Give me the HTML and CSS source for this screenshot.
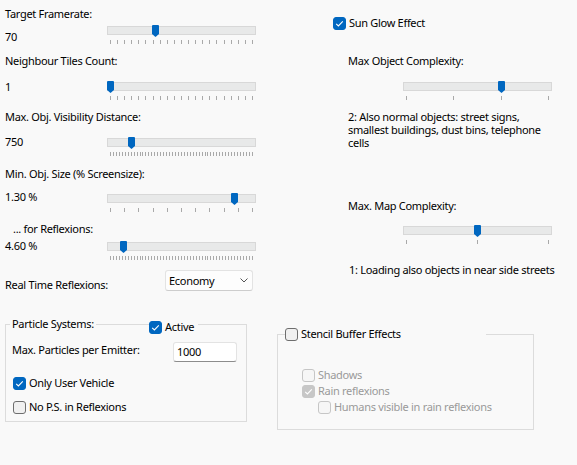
FILE: index.html
```html
<!DOCTYPE html>
<html>
<head>
<meta charset="utf-8">
<link rel="stylesheet" href="styles.css">
</head>
<body>
<div class="dialog">
  <div class="col left">
    <div class="lbl l1">Target Framerate:</div>
    <div class="srow s1">
      <div class="val v1">70</div>
      <div class="slider"><div class="track"></div><svg class="thumb" style="left:45px" width="7" height="12" viewBox="0 0 7 12"><path d="M1 0H6Q7 0 7 1V9L3.5 12L0 9V1Q0 0 1 0Z"/></svg><div class="ticks" data-n="21"></div></div>
    </div>
    <div class="lbl l2">Neighbour Tiles Count:</div>
    <div class="srow s2">
      <div class="val v2">1</div>
      <div class="slider"><div class="track"></div><svg class="thumb" style="left:0px" width="7" height="12" viewBox="0 0 7 12"><path d="M1 0H6Q7 0 7 1V9L3.5 12L0 9V1Q0 0 1 0Z"/></svg><div class="ticks" data-n="21"></div></div>
    </div>
    <div class="lbl l3">Max. Obj. Visibility Distance:</div>
    <div class="srow s3">
      <div class="val v3">750</div>
      <div class="slider"><div class="track"></div><svg class="thumb" style="left:21px" width="7" height="12" viewBox="0 0 7 12"><path d="M1 0H6Q7 0 7 1V9L3.5 12L0 9V1Q0 0 1 0Z"/></svg><div class="ticks" data-n="49"></div></div>
    </div>
    <div class="lbl l4">Min. Obj. Size (% Screensize):</div>
    <div class="srow s4">
      <div class="val v4">1.30 %</div>
      <div class="slider"><div class="track"></div><svg class="thumb" style="left:124px" width="7" height="12" viewBox="0 0 7 12"><path d="M1 0H6Q7 0 7 1V9L3.5 12L0 9V1Q0 0 1 0Z"/></svg><div class="ticks" data-n="11"></div></div>
    </div>
    <div class="lbl l5">... for Reflexions:</div>
    <div class="srow s5">
      <div class="val v5">4.60 %</div>
      <div class="slider"><div class="track"></div><svg class="thumb" style="left:13px" width="7" height="12" viewBox="0 0 7 12"><path d="M1 0H6Q7 0 7 1V9L3.5 12L0 9V1Q0 0 1 0Z"/></svg><div class="ticks" data-n="49"></div></div>
    </div>
    <div class="rtr">
      <div class="rtr-lbl">Real Time Reflexions:</div>
      <div class="select"><span>Economy</span><svg width="8" height="5" viewBox="0 0 8 5"><path d="M0.5 0.5L4 4L7.5 0.5" fill="none" stroke="#555" stroke-width="1"/></svg></div>
    </div>
    <div class="group pgroup">
      <fieldset class="fs pfs">
        <legend class="plegend">Particle Systems:</legend>
        <div class="prow">
          <div class="prow-lbl">Max. Particles per Emitter:</div>
          <div class="input">1000</div>
        </div>
        <div class="check c-ouv"><span class="cb on"><svg width="13" height="13" viewBox="0 0 13 13"><path d="M3.2 6.8L5.4 9L9.8 4.4" fill="none" stroke="#fff" stroke-width="1.1"/></svg></span><span>Only User Vehicle</span></div>
        <div class="check c-nops"><span class="cb"></span><span>No P.S. in Reflexions</span></div>
      </fieldset>
      <div class="check active"><span class="cb on"><svg width="13" height="13" viewBox="0 0 13 13"><path d="M3.2 6.8L5.4 9L9.8 4.4" fill="none" stroke="#fff" stroke-width="1.1"/></svg></span><span>Active</span></div>
    </div>
  </div>
  <div class="col right">
    <div class="check sun"><span class="cb on"><svg width="13" height="13" viewBox="0 0 13 13"><path d="M3.2 6.8L5.4 9L9.8 4.4" fill="none" stroke="#fff" stroke-width="1.1"/></svg></span><span>Sun Glow Effect</span></div>
    <div class="lbl r1">Max Object Complexity:</div>
    <div class="slider rs1"><div class="track"></div><svg class="thumb" style="left:95px" width="7" height="12" viewBox="0 0 7 12"><path d="M1 0H6Q7 0 7 1V9L3.5 12L0 9V1Q0 0 1 0Z"/></svg><div class="ticks" data-n="4"></div></div>
    <div class="desc">2: Also normal objects: street signs,<br>smallest buildings, dust bins, telephone<br>cells</div>
    <div class="lbl r2">Max. Map Complexity:</div>
    <div class="slider rs2"><div class="track"></div><svg class="thumb" style="left:71px" width="7" height="12" viewBox="0 0 7 12"><path d="M1 0H6Q7 0 7 1V9L3.5 12L0 9V1Q0 0 1 0Z"/></svg><div class="ticks" data-n="3"></div></div>
    <div class="lbl r3">1: Loading also objects in near side streets</div>
    <fieldset class="fs sfs">
      <legend class="slegend"><span class="check"><span class="cb"></span><span>Stencil Buffer Effects</span></span></legend>
      <div class="check dis c-sh"><span class="cb"></span><span>Shadows</span></div>
      <div class="check dis c-rain"><span class="cb on"><svg width="13" height="13" viewBox="0 0 13 13"><path d="M3.2 6.8L5.4 9L9.8 4.4" fill="none" stroke="#fff" stroke-width="1.1"/></svg></span><span>Rain reflexions</span></div>
      <div class="check dis c-hum"><span class="cb"></span><span>Humans visible in rain reflexions</span></div>
    </fieldset>
  </div>
</div>
<script src="script.js"></script>
</body>
</html>
```
FILE: styles.css
```css
html, body {
  margin: 0;
  padding: 0;
}
body {
  background: #f9f9f9;
  font-family: "Noto Sans", "Open Sans", sans-serif;
  font-size: 11px;
  line-height: 16px;
  letter-spacing: -0.3px;
  color: #000;
  width: 577px;
  height: 465px;
  overflow: hidden;
}
.dialog {
  display: grid;
  grid-template-columns: 277px 300px;
}
.left {
  padding: 6px 0 0 5px;
}
.right {
  padding-top: 15px;
}
.lbl {
  height: 16px;
  white-space: nowrap;
}
.srow {
  display: flex;
  height: 18px;
}
.val {
  width: 102px;
  flex: none;
  height: 16px;
}
.slider {
  position: relative;
  width: 149px;
  height: 18px;
}
.track {
  height: 9px;
  box-sizing: border-box;
  border: 1px solid #d8d8d8;
  background: #e8e9e9;
}
.thumb {
  position: absolute;
  top: -1px;
  fill: #0067c0;
}
.ticks {
  display: flex;
  justify-content: space-between;
  padding: 0 3px;
  margin-top: 5px;
  height: 4px;
}
.ticks i {
  width: 1px;
  background: #a9a9a9;
}
.s1 { margin-top: 4px; }
.v1 { margin-top: 3px; }
.l2 { margin-top: 9px; }
.s2 { margin-top: 13px; }
.v2 { margin-top: -3px; }
.l3 { margin-top: 9px; }
.s3 { margin-top: 13px; }
.v3 { margin-top: -4px; }
.l4 { margin-top: 10px; }
.s4 { margin-top: 12px; }
.v4 { margin-top: -5px; }
.l5 { margin-top: 9px; padding-left: 8px; }
.s5 { margin-top: 5px; }
.v5 { margin-top: -4px; }

.rtr {
  display: flex;
  height: 21px;
  margin-top: 10px;
}
.rtr-lbl {
  width: 160px;
  margin-top: 7px;
  height: 16px;
}
.select {
  width: 88px;
  height: 21px;
  box-sizing: border-box;
  background: #fdfdfd;
  border: 1px solid #e3e3e3;
  border-bottom-color: #cdcdcd;
  border-radius: 3px;
  display: flex;
  align-items: center;
  justify-content: space-between;
  padding: 0 4px 0 3px;
  line-height: 16px;
}

.fs {
  margin: 0;
  border: 1px solid #dcdcdc;
  min-width: 0;
}
.group {
  position: relative;
}
.pgroup {
  margin-top: 25px;
}
.pfs {
  width: 242px;
  box-sizing: border-box;
  padding: 0 0 6px 0;
}
.plegend {
  margin-left: 4px;
  padding: 0 2px;
  line-height: 16px;
}
.prow {
  display: flex;
  margin: 10px 0 0 6px;
}
.prow-lbl {
  width: 161px;
}
.input {
  width: 64px;
  height: 20px;
  box-sizing: border-box;
  background: #fff;
  border: 1px solid #e3e3e3;
  border-bottom-color: #8c8c8c;
  border-radius: 3px;
  padding: 1px 0 0 3px;
  line-height: 16px;
}
.check {
  display: flex;
  align-items: center;
  gap: 3px;
  height: 16px;
  white-space: nowrap;
}
.cb {
  width: 13px;
  height: 13px;
  box-sizing: border-box;
  border: 1px solid #6e6e6e;
  border-radius: 3px;
  background: #f0f0f0;
  flex: none;
  position: relative;
}
.cb.on {
  background: #0067c0;
  border-color: #0067c0;
}
.cb svg {
  position: absolute;
  left: -1px;
  top: -1px;
}
.c-ouv { margin: 13px 0 0 7px; }
.c-nops { margin: 8px 0 0 7px; }
.active {
  position: absolute;
  left: 144px;
  top: 3px;
  background: #f9f9f9;
  padding-right: 4px;
}

.sun { margin-left: 56px; }
.r1 { margin: 22px 0 0 71px; }
.rs1 { margin: 13px 0 0 126px; }
.desc {
  margin: 10px 0 0 71px;
  line-height: 13px;
}
.r2 { margin: 49px 0 0 71px; }
.rs2 { margin: 12px 0 0 126px; }
.r3 { margin: 18px 0 0 72px; }
.sfs {
  margin-top: 48px;
  width: 257px;
  box-sizing: border-box;
  padding: 0 0 14px 0;
}
.slegend {
  margin-left: 7px;
  padding: 0;
  width: 201px;
  line-height: 16px;
}
.dis {
  color: #9a9a9a;
}
.dis .cb {
  border-color: #c6c6c6;
  background: #f6f6f6;
}
.dis .cb.on {
  background: #c7c7c7;
  border-color: #c7c7c7;
}
.c-sh { margin: 25px 0 0 24px; }
.c-rain { margin: 0 0 0 24px; }
.c-hum { margin: 0 0 0 40px; }
```
FILE: script.js
```js
document.querySelectorAll('.ticks').forEach(function (t) {
  var n = parseInt(t.getAttribute('data-n'), 10);
  for (var i = 0; i < n; i++) {
    t.appendChild(document.createElement('i'));
  }
});
```
